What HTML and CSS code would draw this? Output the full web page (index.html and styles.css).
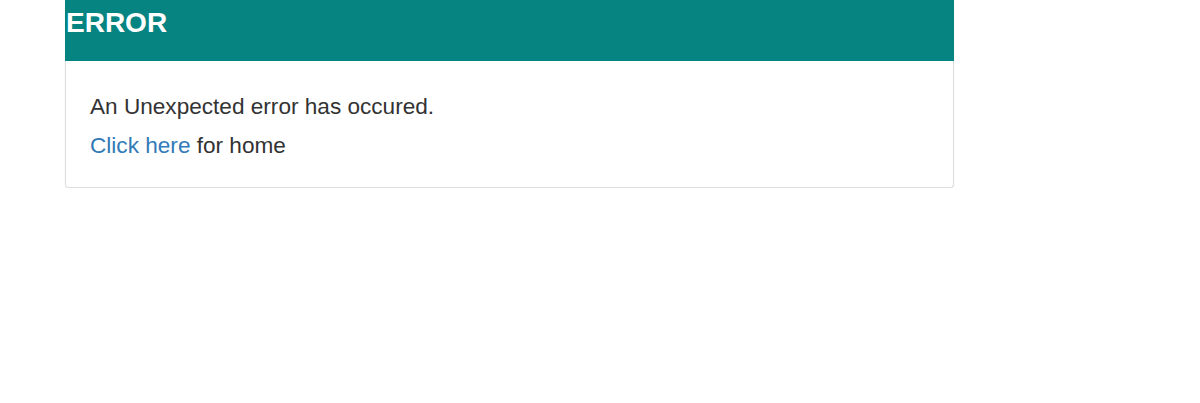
FILE: index.html
```html
<!DOCTYPE html>
<html lang="en">
<head>
    <meta charset="UTF-8">
    <meta name="viewport" content="width=device-width, initial-scale=1.0">
    <title>Error</title>
    <link rel="stylesheet" href="styles.css">
</head>
<body>
    <div class="container">
        <div class="panel">
            <div class="panel-heading">
                <h3 class="panel-title">ERROR</h3>
            </div>
            <div class="panel-body">
                <p>An Unexpected error has occured.</p>
                <p><a href="#">Click here</a> for home</p>
            </div>
        </div>
    </div>
</body>
</html>
```

FILE: styles.css
```css
body {
    font-family: 'Liberation Sans', Arial, sans-serif;
    background-color: #fff;
    color: #333;
    margin: 0;
}

.container {
    width: 889px;
    margin-left: 65px;
}

.panel {
    background-color: #fff;
    border: 1px solid #ddd;
    border-top: none;
    border-radius: 0 0 4px 4px;
    box-shadow: 0 1px 2px rgba(0, 0, 0, 0.05);
}

.panel-heading {
    background-color: #068481;
    height: 61px;
    margin: 0 -1px;
}

.panel-title {
    margin: 0;
    padding-top: 5px;
    color: #fff;
    font-size: 28px;
    font-weight: bold;
    line-height: 36px;
    padding-left: 1px;
}

.panel-body {
    padding: 31px 24px 17px;
}

.panel-body p {
    margin: 0 0 10px;
    font-size: 22.6px;
    line-height: 29px;
}

a {
    color: #337ab7;
    text-decoration: none;
}
```
